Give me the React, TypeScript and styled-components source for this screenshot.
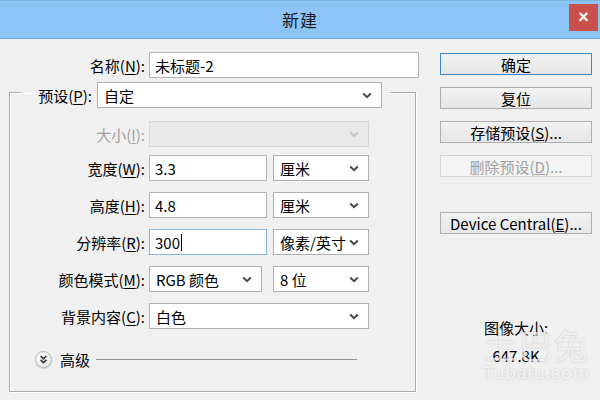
import styled, { createGlobalStyle } from 'styled-components';

const GlobalStyle = createGlobalStyle`
  html, body {
    margin: 0;
    padding: 0;
  }
  body {
    width: 600px;
    height: 400px;
    overflow: hidden;
    background: #f0f0f0;
    font-family: "Noto Sans CJK SC", "Liberation Sans", sans-serif;
    color: #000;
  }
`;

const Window = styled.div`
  width: 600px;
  height: 400px;
  overflow: hidden;
  background: #f0f0f0;
  display: flex;
  flex-direction: column;
`;

const TitleBar = styled.div`
  flex-shrink: 0;
  background: #8cc4f7;
  border-top: 1px solid #7fb0de;
  border-bottom: 1px solid #76a9dc;
  box-sizing: border-box;
  height: 39px;
  display: flex;
  align-items: center;
  justify-content: center;
  position: relative;
`;

const Title = styled.div`
  font-size: 17px;
  color: #1a1a1a;
  letter-spacing: 1px;
`;

const CloseButton = styled.div`
  position: absolute;
  top: 3px;
  right: 2px;
  width: 29px;
  height: 27px;
  background: #c9504c;
  color: #fff;
  display: flex;
  align-items: center;
  justify-content: center;
  font-family: "Liberation Sans", sans-serif;
  font-size: 18px;
  font-weight: bold;
`;

const Body = styled.div`
  flex: 1;
  display: flex;
  padding-top: 13px;
`;

const LeftPane = styled.div`
  width: 411px;
  padding-left: 9px;
  display: flex;
  flex-direction: column;
`;

const Row = styled.div<{ $tight?: boolean }>`
  display: flex;
  align-items: center;
  gap: 4px;
  height: 26px;
  margin-bottom: ${({ $tight }) => ($tight ? '-3px' : '0')};
`;

const Label = styled.div<{ $width?: number; $disabled?: boolean }>`
  width: ${({ $width }) => $width ?? 135}px;
  flex-shrink: 0;
  text-align: right;
  font-size: 15px;
  white-space: nowrap;
  color: ${({ $disabled }) => ($disabled ? '#a2a2a2' : '#000')};
  u {
    text-underline-offset: 2px;
  }
`;

const TextField = styled.div<{ $width: number; $focused?: boolean }>`
  width: ${({ $width }) => $width}px;
  height: 26px;
  box-sizing: border-box;
  background: #fff;
  border: 1px solid ${({ $focused }) => ($focused ? '#86b3e0' : '#b4b4b4')};
  padding-left: 5px;
  font-size: 15px;
  display: flex;
  align-items: center;
`;

const Caret = styled.span`
  display: inline-block;
  width: 1px;
  height: 17px;
  background: #000;
  margin-left: 1px;
`;

const DropBox = styled.div<{ $width: number; $disabled?: boolean }>`
  width: ${({ $width }) => $width}px;
  height: 26px;
  box-sizing: border-box;
  background: ${({ $disabled }) => ($disabled ? '#e8e8e8' : '#fff')};
  border: 1px solid ${({ $disabled }) => ($disabled ? '#d6d6d6' : '#b0b0b0')};
  padding: 0 9px 0 6px;
  font-size: 15px;
  display: flex;
  align-items: center;
  justify-content: space-between;
  white-space: nowrap;
`;

const Chevron = ({ color = '#474747' }: { color?: string }) => (
  <svg width="10" height="7" viewBox="0 0 10 7">
    <polyline points="1.2,1.5 5,5.2 8.8,1.5" fill="none" stroke={color} strokeWidth="2" />
  </svg>
);

const Dropdown = ({ width, value, disabled }: { width: number; value?: string; disabled?: boolean }) => (
  <DropBox $width={width} $disabled={disabled}>
    <span>{value}</span>
    <Chevron color={disabled ? '#c4c4c4' : '#474747'} />
  </DropBox>
);

const Group = styled.fieldset`
  margin: -1px 0 0 0;
  padding: 0 0 23px 0;
  width: 407px;
  box-sizing: border-box;
  border: 1px solid #a9a9a9;
  box-shadow: inset 1px 1px 0 #fff, 1px 1px 0 #fff;
  min-inline-size: 0;
`;

const Legend = styled.legend`
  margin-left: 11px;
  padding: 5px 8px 0 0;
  display: flex;
  align-items: center;
  gap: 5px;
`;

const Rows = styled.div`
  margin-top: 13px;
  display: flex;
  flex-direction: column;
  gap: 11px;
`;

const Units = styled.div<{ $gap?: number }>`
  display: flex;
  gap: ${({ $gap }) => $gap ?? 6}px;
`;

const Advanced = styled.div`
  margin-top: 21px;
  padding-left: 25px;
  height: 18px;
  display: flex;
  align-items: center;
  gap: 8px;
  font-size: 15px;
`;

const ExpandIcon = styled.div`
  width: 17px;
  height: 17px;
  box-sizing: border-box;
  border-radius: 50%;
  border: 1px solid #b9b9b9;
  background: radial-gradient(circle at 40% 35%, #ffffff, #e2e2e2);
  box-shadow: 0 1px 1px rgba(0, 0, 0, 0.15);
  display: flex;
  align-items: center;
  justify-content: center;
`;

const Rule = styled.div`
  width: 261px;
  height: 1px;
  background: #8f8f8f;
  margin-left: -2px;
`;

const RightPane = styled.div`
  margin-left: 20px;
  width: 152px;
  padding-top: 1px;
  display: flex;
  flex-direction: column;
  gap: 12px;
  position: relative;
`;

const Button = styled.div<{ $primary?: boolean; $disabled?: boolean; $gap?: number }>`
  height: 22px;
  box-sizing: border-box;
  border: 1px solid ${({ $primary, $disabled }) => ($primary ? '#3f86c4' : $disabled ? '#d5d5d5' : '#adadad')};
  background: ${({ $disabled }) =>
    $disabled ? '#f4f4f4' : 'linear-gradient(#f2f2f2, #e6e6e6)'};
  color: ${({ $disabled }) => ($disabled ? '#a0a0a0' : '#000')};
  font-size: 15px;
  display: flex;
  align-items: center;
  justify-content: center;
  white-space: nowrap;
  margin-top: ${({ $gap }) => $gap ?? 0}px;
`;

const SizeInfo = styled.div`
  margin-top: 68px;
  text-align: center;
  font-size: 15px;
  line-height: 28px;
`;

const Watermark = styled.div`
  position: absolute;
  left: 36px;
  top: 276px;
  width: 120px;
  text-align: center;
  white-space: nowrap;
  color: rgba(255, 255, 255, 0.7);
  text-shadow: 0 0 2px rgba(0, 0, 0, 0.2);
  pointer-events: none;
  line-height: 1;
`;

const WatermarkBig = styled.div`
  font-size: 34px;
  letter-spacing: 1px;
`;

const WatermarkSmall = styled.div`
  font-family: "Liberation Sans", sans-serif;
  font-weight: bold;
  font-size: 19px;
  margin-top: 1px;
`;

export default function App() {
  return (
    <>
      <GlobalStyle />
      <Window>
        <TitleBar>
          <Title>新建</Title>
          <CloseButton>×</CloseButton>
        </TitleBar>
        <Body>
          <LeftPane>
            <Row>
              <Label $width={136}>
                名称(<u>N</u>):
              </Label>
              <TextField $width={270}>未标题-2</TextField>
            </Row>
            <Group>
              <Legend>
                <Label $width={71}>
                  预设(<u>P</u>):
                </Label>
                <Dropdown width={285} value="自定" />
              </Legend>
              <Rows>
                <Row $tight>
                  <Label $disabled>
                    大小(<u>I</u>):
                  </Label>
                  <Dropdown width={220} disabled />
                </Row>
                <Row>
                  <Label>
                    宽度(<u>W</u>):
                  </Label>
                  <Units>
                    <TextField $width={118}>3.3</TextField>
                    <Dropdown width={96} value="厘米" />
                  </Units>
                </Row>
                <Row>
                  <Label>
                    高度(<u>H</u>):
                  </Label>
                  <Units>
                    <TextField $width={118}>4.8</TextField>
                    <Dropdown width={96} value="厘米" />
                  </Units>
                </Row>
                <Row>
                  <Label>
                    分辨率(<u>R</u>):
                  </Label>
                  <Units>
                    <TextField $width={118} $focused>
                      300
                      <Caret />
                    </TextField>
                    <Dropdown width={96} value="像素/英寸" />
                  </Units>
                </Row>
                <Row>
                  <Label>
                    颜色模式(<u>M</u>):
                  </Label>
                  <Units $gap={11}>
                    <Dropdown width={113} value="RGB 颜色" />
                    <Dropdown width={96} value="8 位" />
                  </Units>
                </Row>
                <Row>
                  <Label>
                    背景内容(<u>C</u>):
                  </Label>
                  <Dropdown width={220} value="白色" />
                </Row>
              </Rows>
              <Advanced>
                <ExpandIcon>
                  <svg width="9" height="9" viewBox="0 0 9 9">
                    <polyline points="1.5,1 4.5,3.8 7.5,1" fill="none" stroke="#333" strokeWidth="1.6" />
                    <polyline points="1.5,4.8 4.5,7.6 7.5,4.8" fill="none" stroke="#333" strokeWidth="1.6" />
                  </svg>
                </ExpandIcon>
                <span>高级</span>
                <Rule />
              </Advanced>
            </Group>
          </LeftPane>
          <RightPane>
            <Button $primary>确定</Button>
            <Button>复位</Button>
            <Button>
              存储预设(<u>S</u>)...
            </Button>
            <Button $disabled>
              删除预设(<u>D</u>)...
            </Button>
            <Button $gap={23}>
              Device Central(<u>E</u>)...
            </Button>
            <SizeInfo>
              <div>图像大小:</div>
              <div>647.8K</div>
            </SizeInfo>
            <Watermark>
              <WatermarkBig>土巴兔</WatermarkBig>
              <WatermarkSmall>Tubatu.com</WatermarkSmall>
            </Watermark>
          </RightPane>
        </Body>
      </Window>
    </>
  );
}
